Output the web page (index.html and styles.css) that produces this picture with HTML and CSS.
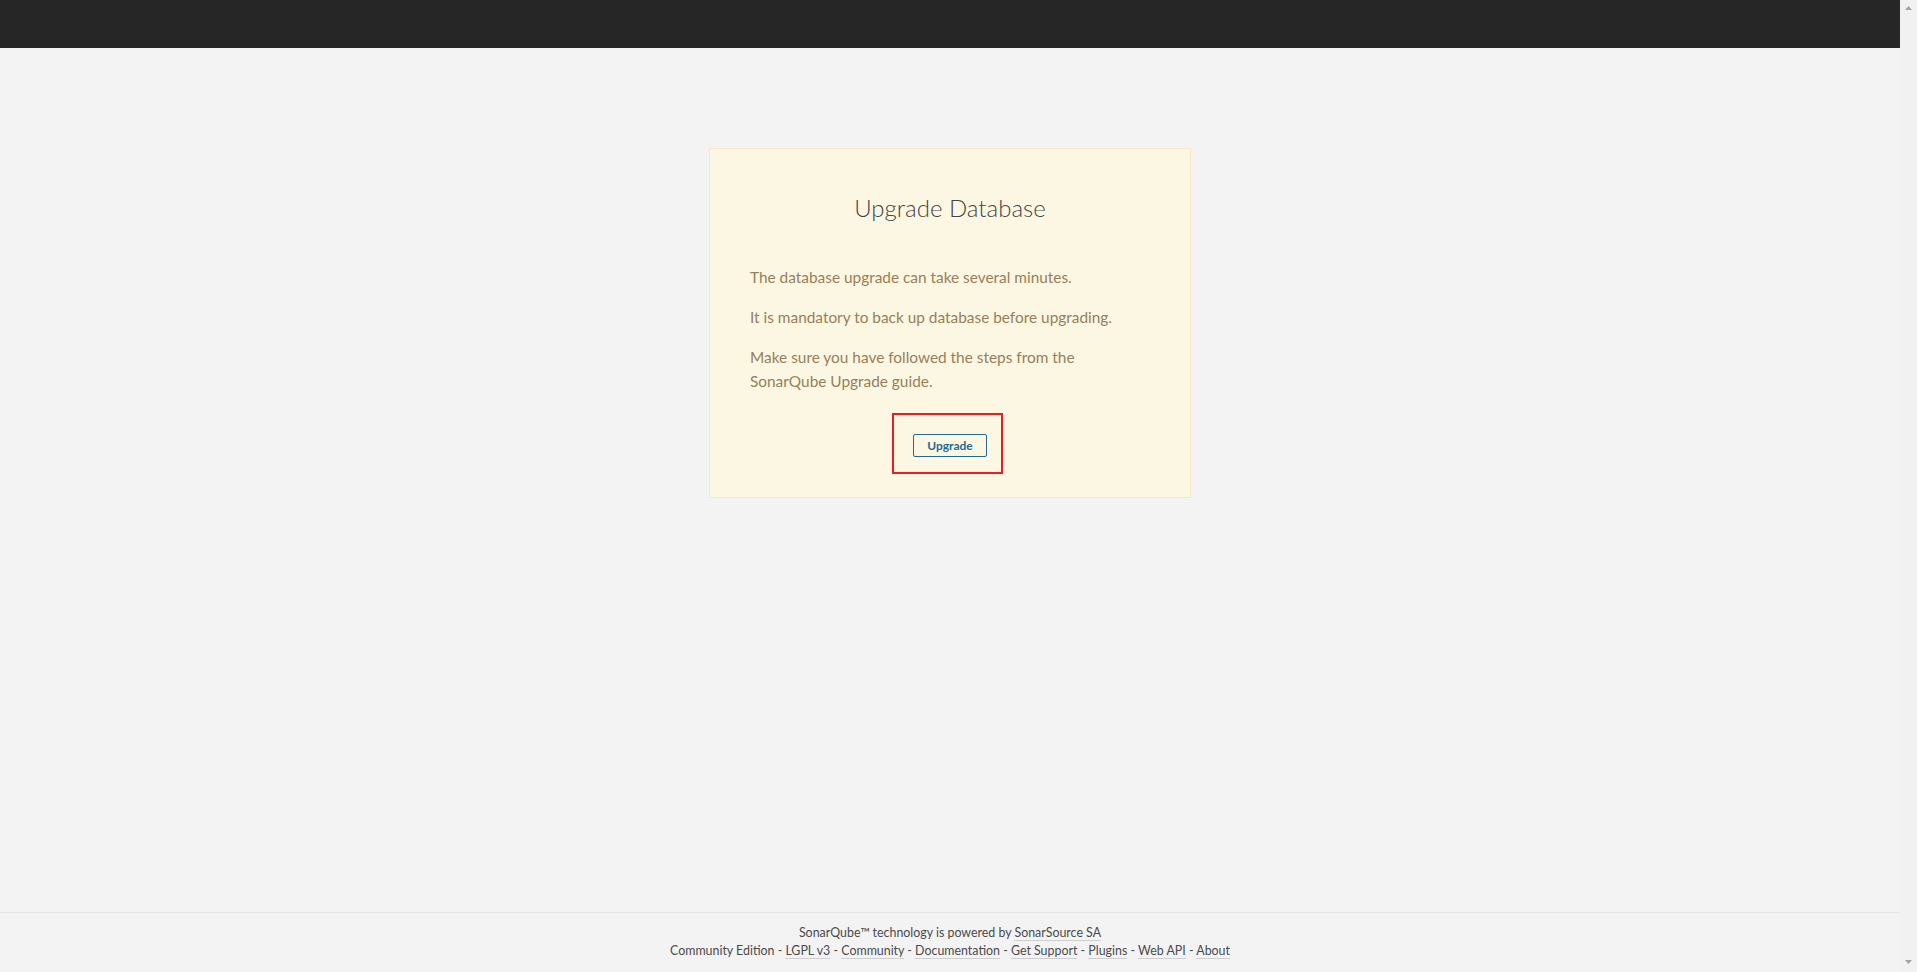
FILE: index.html
```html
<!DOCTYPE html>
<html lang="en">
<head>
<meta charset="utf-8">
<title>SonarQube - Upgrade Database</title>
<link rel="stylesheet" href="styles.css">
</head>
<body>
<div class="app">
  <div class="main">
    <header class="topbar"></header>
    <main class="content">
      <div class="card">
        <h1 class="card-title">Upgrade Database</h1>
        <p class="card-text">The database upgrade can take several minutes.</p>
        <p class="card-text">It is mandatory to back up database before upgrading.</p>
        <p class="card-text">Make sure you have followed the steps from the SonarQube Upgrade guide.</p>
        <div class="actions">
          <span class="btn-wrap">
            <button class="btn" type="button">Upgrade</button>
            <span class="highlight"></span>
          </span>
        </div>
      </div>
    </main>
    <footer class="footer">
      <div>SonarQube™ technology is powered by <a href="#">SonarSource SA</a></div>
      <div>Community Edition - <a href="#">LGPL v3</a> - <a href="#">Community</a> - <a href="#">Documentation</a> - <a href="#">Get Support</a> - <a href="#">Plugins</a> - <a href="#">Web API</a> - <a href="#">About</a></div>
    </footer>
  </div>
  <div class="scrollbar">
    <svg class="arrow" width="7" height="4" viewBox="0 0 7 4"><path d="M3.5 0 L7 4 L0 4 Z" fill="#a3a3a3"/></svg>
    <svg class="arrow" width="7" height="4" viewBox="0 0 7 4"><path d="M0 0 L7 0 L3.5 4 Z" fill="#a3a3a3"/></svg>
  </div>
</div>
</body>
</html>
```

FILE: styles.css
```css
html, body {
  margin: 0;
  padding: 0;
}

body {
  background: #f3f3f3;
  font-family: Lato, "Liberation Sans", sans-serif;
  color: #444;
}

.app {
  display: flex;
  height: 100vh;
  overflow: hidden;
}

.main {
  flex: 1;
  min-width: 0;
  display: flex;
  flex-direction: column;
}

.topbar {
  flex: none;
  height: 48px;
  background: #262626;
}

.content {
  flex: 1;
  padding-top: 100px;
}

.card {
  width: 400px;
  margin: 0 auto;
  padding: 40px;
  background: #fcf7e2;
  border: 1px solid #f8e8c6;
  color: #97805a;
}

.card-title {
  margin: 4px 0 42px;
  font-size: 24px;
  line-height: 30px;
  font-weight: 300;
  text-align: center;
  color: #444;
}

.card-text {
  margin: 0 0 16px;
  max-width: 385px;
  font-size: 15.4px;
  line-height: 24px;
}

.actions {
  display: flex;
  justify-content: center;
  margin-top: 41px;
}

.btn-wrap {
  position: relative;
  display: block;
}

.btn {
  display: block;
  height: 23px;
  padding: 0 13px;
  border: 1px solid #236a97;
  border-radius: 2px;
  background: transparent;
  color: #236a97;
  font-family: Lato, "Liberation Sans", sans-serif;
  font-size: 12px;
  font-weight: 700;
  line-height: 21px;
}

.highlight {
  position: absolute;
  left: -21px;
  top: -21px;
  right: -16px;
  bottom: -17px;
  border: 2px solid #ed1c24;
  pointer-events: none;
}

.footer {
  flex: none;
  border-top: 1px solid #e4e4e4;
  padding: 11px 0 12px;
  font-size: 12.4px;
  line-height: 18px;
  text-align: center;
  color: #4a4a4a;
}

.footer a {
  color: #4a4a4a;
  text-decoration: none;
  border-bottom: 1px solid #cfcfcf;
}

.scrollbar {
  flex: none;
  width: 17px;
  background: #f1f1f1;
  display: flex;
  flex-direction: column;
  justify-content: space-between;
  align-items: center;
  padding: 6px 0 8px;
  box-sizing: border-box;
}

.arrow {
  display: block;
}
```
